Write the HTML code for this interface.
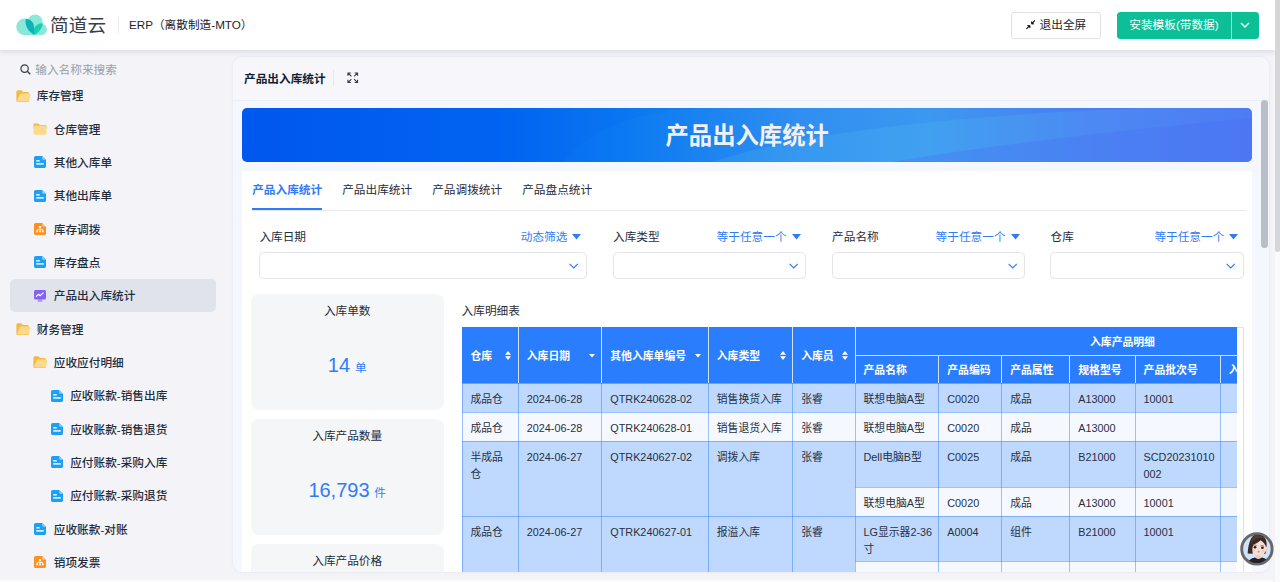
<!DOCTYPE html><html lang="zh-CN"><head><meta charset="utf-8"><title>产品出入库统计</title><style>
*{box-sizing:border-box;margin:0;padding:0}
html,body{width:1280px;height:582px;overflow:hidden;background:#f3f3f8}
body{position:relative;font-family:"Liberation Sans","Noto Sans CJK SC",sans-serif;font-size:11.67px;color:#1f2d3d;line-height:1}
.a{position:absolute;white-space:nowrap}
.t{position:absolute;white-space:nowrap;line-height:16px;height:16px}
#hdr{left:0;top:0;width:1275px;height:50px;background:#fff;box-shadow:0 1px 6px rgba(60,70,100,.18)}
#side{left:0;top:50px;width:233px;height:532px}
.si{position:absolute;left:0;width:233px;height:33.33px}
.si .tx{position:absolute;top:0;line-height:33.33px;font-weight:500;color:#1f2d3d;white-space:nowrap}
.si svg{position:absolute}
#panel{left:233px;top:57px;width:1036px;height:515px;background:#f6f6fb;border-radius:9px;overflow:hidden;box-shadow:0 0 3px rgba(80,90,120,.10)}
#cont{left:0;top:42.5px;width:1036px;height:473px;background:#f4f8fe;border-top:1px solid #ebeef5}
#banner{left:9px;top:51px;width:1010.4px;height:54px;border-radius:5px;overflow:hidden;background:linear-gradient(90deg,#0058f0 0%,#0264f2 25%,#0b7af2 38%,#2f8ef0 55%,#3c98f0 68%,#4a7cf3 85%,#4a6cf5 100%)}
#card{left:9px;top:113.5px;width:1010.4px;height:402px;background:#fff}
.lnk{color:#2f7cf6}
.inp{position:absolute;height:27.3px;border:1px solid #e3e5ea;border-radius:4.500px;background:#fff}
.stat{position:absolute;left:8.5px;width:193.4px;height:116px;background:#f5f6f8;border-radius:8px}
.stat .lb{position:absolute;left:0;right:0;top:8.6px;text-align:center;line-height:16px;color:#1f2d3d}
.stat .vl{position:absolute;left:0;right:0;text-align:center;color:#2f7cf6;white-space:nowrap}


#tb{position:absolute;left:461.6px;top:327.4px;width:782.4px;height:244.2px;overflow:hidden;background:#fff;box-shadow:inset -1px 0 0 #d5e3fc, inset 0 1px 0 #d5e3fc}
#tbi{position:absolute;left:0;top:0;width:775.4px;height:260px;overflow:hidden}
.c{position:absolute;overflow:hidden}
.c span{position:absolute;left:8.8px;top:7.2px;line-height:16.67px;font-size:10.83px;color:#27303f;white-space:nowrap;font-family:"Liberation Sans","Noto Sans CJK SC",sans-serif}
.h span{color:#fff;font-weight:700;font-family:"Noto Sans CJK SC","Liberation Sans",sans-serif}
.v{position:absolute;width:1px}
.hl{position:absolute;height:1px}
</style></head><body><div id="hdr" class="a">
<svg class="a" style="left:10px;top:8px" width="50" height="34" viewBox="10 8 50 34">
<g fill="#8ae8d9"><circle cx="24.600" cy="26.900" r="8.300"/><circle cx="35.100" cy="22.100" r="7.600"/><circle cx="41.100" cy="29.400" r="5.800"/><rect x="24.600" y="27" width="16.500" height="8.200"/></g>
<path d="M25.800 18.800C30.500 19 34 22.500 34 27L34 34.900C29 31.500 24.300 27 25.800 18.800Z" fill="#0cb4b8"/>
<path d="M34 34.900L34 28.500C35.500 25 39 23 42.700 23.200C42.500 28 39 32.500 34 34.900Z" fill="#1acfb0"/>
</svg>
<div class="a cjk" style="left:50px;top:13.600px;font-size:18.600px;line-height:24px;color:#3a3f47;letter-spacing:.2px">简道云</div>
<div class="a" style="left:118px;top:17px;width:1px;height:16px;background:#e6e8ec"></div>
<div class="a" style="left:129px;top:17px;line-height:16px;font-size:11.67px;color:#1f2329">ERP（离散制造-MTO）</div>
<div class="a" style="left:1011px;top:12px;width:89.6px;height:26.7px;border:1px solid #dfe1e6;border-radius:3px;background:#fff"></div>
<svg class="a" style="left:1025.700px;top:19.900px" width="9.400" height="9.400" viewBox="0 0 10 10"><path d="M9.6.4 6 4M6 4V1.500M6 4h2.500M.4 9.600 4 6M4 6v2.500M4 6H1.500" stroke="#1f2329" stroke-width="1.200" fill="none"/><path d="M5.600 4.400V1.600L8.400 4.400zM4.400 5.600v2.800L1.600 5.600z" fill="#1f2329"/></svg>
<div class="a cjk" style="left:1039.6px;top:17px;line-height:16px;color:#1f2329">退出全屏</div>
<div class="a" style="left:1117.3px;top:12px;width:141.5px;height:26.7px;border-radius:3.500px;background:#0dbf96"></div>
<div class="a" style="left:1231.2px;top:12px;width:1px;height:26.7px;background:#9be5d3"></div>
<div class="a cjk" style="left:1129.3px;top:17px;line-height:16px;color:#fff">安装模板(带数据)</div>
<svg class="a" style="left:1240.4px;top:22.3px" width="10" height="6" viewBox="0 0 10 6"><path d="M1 1l4 4 4-4" stroke="#fff" stroke-width="1.400" fill="none"/></svg>
</div>
<div class="a" style="left:1275px;top:0;width:5px;height:582px;background:#fafafa"></div>
<div class="a" style="left:1275px;top:0;width:5px;height:252px;background:#d6d6d8;border-radius:0 0 3px 3px"></div>
<div id="side" class="a">
<svg class="a" style="left:20px;top:13.500px" width="11" height="11" viewBox="0 0 11 11"><circle cx="4.600" cy="4.600" r="3.700" stroke="#3a3f47" stroke-width="1.200" fill="none"/><path d="M7.300 7.300l3 3" stroke="#3a3f47" stroke-width="1.300"/></svg>
<div class="a" style="left:35.3px;top:11.700px;line-height:16px;color:#9a9ea6">输入名称来搜索</div>
<div class="a" style="left:10px;top:229px;width:206px;height:33px;border-radius:5px;background:#e1e3ea"></div>
<div class="si" style="top:29.33px"><svg style="left:16.1px;top:10.3px" width="14.500" height="12.500" viewBox="0 0 14.500 12.500"><path d="M.4 2C.4 1 1.100.3 2 .3h3c.5 0 .9.200 1.200.6l.8 1h4.300c.9 0 1.600.7 1.600 1.600v6.900c0 .9-.7 1.600-1.600 1.600H2c-.9 0-1.600-.7-1.600-1.600z" fill="#f7b740"/><path d="M3.600 4.600c.15-.6.700-1 1.300-1h8.200c.9 0 1.500.8 1.300 1.700l-1.200 5.300c-.15.600-.7 1-1.300 1H2.600c-.9 0-1.500-.8-1.300-1.600z" fill="#fdd98c"/></svg><div class="tx" style="left:36.8px">库存管理</div></div>
<div class="si" style="top:62.66px"><svg style="left:33.2px;top:10.1px" width="14" height="12" viewBox="0 0 14 12"><path d="M0.400 1.800C0.400 1 1 .4 1.800.4h3c.4 0 .8.200 1.100.5l.9 1h5.300c.8 0 1.400.6 1.400 1.400V5H.4z" fill="#f7b84b"/><rect x=".4" y="2.700" width="13.100" height="9" rx="1.400" fill="#fdd98c"/></svg><div class="tx" style="left:53.8px">仓库管理</div></div>
<div class="si" style="top:96.00px"><svg style="left:34.0px;top:10.4px" width="12" height="12" viewBox="0 0 12 12"><path d="M1.800 0h6.400L12 3.800v6.400c0 1-.8 1.800-1.800 1.800H1.800C.8 12 0 11.200 0 10.200V1.800C0 .8.800 0 1.800 0z" fill="#1c9ff7"/><path d="M8.200 0 12 3.800H9.400c-.7 0-1.200-.5-1.200-1.200z" fill="#8fd0fb"/><rect x="2.200" y="4.200" width="3.600" height="1.300" fill="#fff"/><rect x="2.200" y="7.200" width="7.600" height="1.400" fill="#fff"/></svg><div class="tx" style="left:53.8px">其他入库单</div></div>
<div class="si" style="top:129.33px"><svg style="left:34.0px;top:10.4px" width="12" height="12" viewBox="0 0 12 12"><path d="M1.800 0h6.400L12 3.800v6.400c0 1-.8 1.800-1.800 1.800H1.800C.8 12 0 11.200 0 10.200V1.800C0 .8.800 0 1.800 0z" fill="#1c9ff7"/><path d="M8.200 0 12 3.800H9.400c-.7 0-1.200-.5-1.200-1.200z" fill="#8fd0fb"/><rect x="2.200" y="4.200" width="3.600" height="1.300" fill="#fff"/><rect x="2.200" y="7.200" width="7.600" height="1.400" fill="#fff"/></svg><div class="tx" style="left:53.8px">其他出库单</div></div>
<div class="si" style="top:162.66px"><svg style="left:34.0px;top:10.4px" width="12" height="12" viewBox="0 0 12 12"><path d="M1.800 0h6.400L12 3.800v6.400c0 1-.8 1.800-1.800 1.800H1.800C.8 12 0 11.200 0 10.200V1.800C0 .8.800 0 1.800 0z" fill="#ff8f1f"/><path d="M8.200 0 12 3.800H9.400c-.7 0-1.200-.5-1.200-1.200z" fill="#ffc78c"/><rect x="4.900" y="3" width="2.200" height="2" fill="#fff"/><rect x="2.200" y="7.500" width="1.900" height="1.800" fill="#fff"/><rect x="5.050" y="7.500" width="1.900" height="1.800" fill="#fff"/><rect x="7.900" y="7.500" width="1.900" height="1.800" fill="#fff"/><path d="M6 5v1.400M3.150 7.500V6.400h5.700v1.100M6 6.400v1.100" stroke="#fff" stroke-width=".8" fill="none"/></svg><div class="tx" style="left:53.8px">库存调拨</div></div>
<div class="si" style="top:196.00px"><svg style="left:34.0px;top:10.4px" width="12" height="12" viewBox="0 0 12 12"><path d="M1.800 0h6.400L12 3.800v6.400c0 1-.8 1.800-1.800 1.800H1.800C.8 12 0 11.200 0 10.200V1.800C0 .8.800 0 1.800 0z" fill="#1c9ff7"/><path d="M8.200 0 12 3.800H9.400c-.7 0-1.200-.5-1.200-1.200z" fill="#8fd0fb"/><rect x="2.200" y="4.200" width="3.600" height="1.300" fill="#fff"/><rect x="2.200" y="7.200" width="7.600" height="1.400" fill="#fff"/></svg><div class="tx" style="left:53.8px">库存盘点</div></div>
<div class="si" style="top:229.33px"><svg style="left:34.0px;top:10.4px" width="12" height="12" viewBox="0 0 12 12"><path d="M4.300 9.200h3.400l.9 2.500H3.400z" fill="#ab92f9"/><rect x="0" y="0" width="12" height="9.400" rx="1.500" fill="#8560f2"/><path d="M2.300 6.400l2-2 1.900 1.200 3-2.700" stroke="#fff" stroke-width="1.250" fill="none" stroke-linejoin="round" stroke-linecap="round"/></svg><div class="tx" style="left:53.8px">产品出入库统计</div></div>
<div class="si" style="top:262.66px"><svg style="left:16.1px;top:10.3px" width="14.500" height="12.500" viewBox="0 0 14.500 12.500"><path d="M.4 2C.4 1 1.100.3 2 .3h3c.5 0 .9.200 1.200.6l.8 1h4.300c.9 0 1.600.7 1.600 1.600v6.900c0 .9-.7 1.600-1.600 1.600H2c-.9 0-1.600-.7-1.600-1.600z" fill="#f7b740"/><path d="M3.600 4.600c.15-.6.700-1 1.300-1h8.200c.9 0 1.500.8 1.300 1.700l-1.200 5.300c-.15.600-.7 1-1.300 1H2.600c-.9 0-1.500-.8-1.300-1.600z" fill="#fdd98c"/></svg><div class="tx" style="left:36.8px">财务管理</div></div>
<div class="si" style="top:295.99px"><svg style="left:33.2px;top:10.3px" width="14.500" height="12.500" viewBox="0 0 14.500 12.500"><path d="M.4 2C.4 1 1.100.3 2 .3h3c.5 0 .9.200 1.200.6l.8 1h4.300c.9 0 1.600.7 1.600 1.600v6.900c0 .9-.7 1.600-1.600 1.600H2c-.9 0-1.600-.7-1.600-1.600z" fill="#f7b740"/><path d="M3.600 4.600c.15-.6.700-1 1.300-1h8.200c.9 0 1.500.8 1.300 1.700l-1.200 5.300c-.15.600-.7 1-1.300 1H2.600c-.9 0-1.500-.8-1.300-1.600z" fill="#fdd98c"/></svg><div class="tx" style="left:53.8px">应收应付明细</div></div>
<div class="si" style="top:329.33px"><svg style="left:51.0px;top:10.4px" width="12" height="12" viewBox="0 0 12 12"><path d="M1.800 0h6.400L12 3.800v6.400c0 1-.8 1.800-1.800 1.800H1.800C.8 12 0 11.200 0 10.200V1.800C0 .8.800 0 1.800 0z" fill="#1c9ff7"/><path d="M8.200 0 12 3.800H9.400c-.7 0-1.200-.5-1.200-1.200z" fill="#8fd0fb"/><rect x="2.200" y="4.200" width="3.600" height="1.300" fill="#fff"/><rect x="2.200" y="7.200" width="7.600" height="1.400" fill="#fff"/></svg><div class="tx" style="left:70.2px">应收账款-销售出库</div></div>
<div class="si" style="top:362.66px"><svg style="left:51.0px;top:10.4px" width="12" height="12" viewBox="0 0 12 12"><path d="M1.800 0h6.400L12 3.800v6.400c0 1-.8 1.800-1.800 1.800H1.800C.8 12 0 11.200 0 10.200V1.800C0 .8.800 0 1.800 0z" fill="#1c9ff7"/><path d="M8.200 0 12 3.800H9.400c-.7 0-1.200-.5-1.200-1.200z" fill="#8fd0fb"/><rect x="2.200" y="4.200" width="3.600" height="1.300" fill="#fff"/><rect x="2.200" y="7.200" width="7.600" height="1.400" fill="#fff"/></svg><div class="tx" style="left:70.2px">应收账款-销售退货</div></div>
<div class="si" style="top:395.99px"><svg style="left:51.0px;top:10.4px" width="12" height="12" viewBox="0 0 12 12"><path d="M1.800 0h6.400L12 3.800v6.400c0 1-.8 1.800-1.800 1.800H1.800C.8 12 0 11.200 0 10.200V1.800C0 .8.800 0 1.800 0z" fill="#1c9ff7"/><path d="M8.200 0 12 3.800H9.400c-.7 0-1.200-.5-1.200-1.200z" fill="#8fd0fb"/><rect x="2.200" y="4.200" width="3.600" height="1.300" fill="#fff"/><rect x="2.200" y="7.200" width="7.600" height="1.400" fill="#fff"/></svg><div class="tx" style="left:70.2px">应付账款-采购入库</div></div>
<div class="si" style="top:429.33px"><svg style="left:51.0px;top:10.4px" width="12" height="12" viewBox="0 0 12 12"><path d="M1.800 0h6.400L12 3.800v6.400c0 1-.8 1.800-1.800 1.800H1.800C.8 12 0 11.200 0 10.200V1.800C0 .8.800 0 1.800 0z" fill="#1c9ff7"/><path d="M8.200 0 12 3.800H9.400c-.7 0-1.200-.5-1.200-1.200z" fill="#8fd0fb"/><rect x="2.200" y="4.200" width="3.600" height="1.300" fill="#fff"/><rect x="2.200" y="7.200" width="7.600" height="1.400" fill="#fff"/></svg><div class="tx" style="left:70.2px">应付账款-采购退货</div></div>
<div class="si" style="top:462.66px"><svg style="left:34.0px;top:10.4px" width="12" height="12" viewBox="0 0 12 12"><path d="M1.800 0h6.400L12 3.800v6.400c0 1-.8 1.800-1.800 1.800H1.800C.8 12 0 11.200 0 10.200V1.800C0 .8.800 0 1.800 0z" fill="#1c9ff7"/><path d="M8.200 0 12 3.800H9.400c-.7 0-1.200-.5-1.200-1.200z" fill="#8fd0fb"/><rect x="2.200" y="4.200" width="3.600" height="1.300" fill="#fff"/><rect x="2.200" y="7.200" width="7.600" height="1.400" fill="#fff"/></svg><div class="tx" style="left:53.8px">应收账款-对账</div></div>
<div class="si" style="top:495.99px"><svg style="left:34.0px;top:10.4px" width="12" height="12" viewBox="0 0 12 12"><path d="M1.800 0h6.400L12 3.800v6.400c0 1-.8 1.800-1.800 1.800H1.800C.8 12 0 11.200 0 10.200V1.800C0 .8.800 0 1.800 0z" fill="#ff8f1f"/><path d="M8.200 0 12 3.800H9.400c-.7 0-1.200-.5-1.200-1.200z" fill="#ffc78c"/><rect x="4.900" y="3" width="2.200" height="2" fill="#fff"/><rect x="2.200" y="7.500" width="1.900" height="1.800" fill="#fff"/><rect x="5.050" y="7.500" width="1.900" height="1.800" fill="#fff"/><rect x="7.900" y="7.500" width="1.900" height="1.800" fill="#fff"/><path d="M6 5v1.400M3.150 7.500V6.400h5.700v1.100M6 6.400v1.100" stroke="#fff" stroke-width=".8" fill="none"/></svg><div class="tx" style="left:53.8px">销项发票</div></div>
</div>
<div class="a" style="left:0;top:579.5px;width:1273px;height:3px;background:#fbfbfd"></div>
<div id="panel" class="a">
<div class="a cjk" style="left:11px;top:13.500px;line-height:16px;font-weight:700;color:#141e31">产品出入库统计</div>
<div class="a" style="left:99.5px;top:13px;width:1px;height:16px;background:#e4e7ed"></div>
<svg class="a" style="left:114.300px;top:15.100px" width="11.500" height="11.500" viewBox="0 0 12 12"><path d="M1 4V1h3M1.200 1.200 4.600 4.600M8 1h3v3M10.800 1.200 7.400 4.600M1 8v3h3M1.200 10.800 4.600 7.400M11 8v3H8M10.800 10.800 7.400 7.400" stroke="#363d4c" stroke-width="1.150" fill="none"/></svg>
<div id="cont" class="a"></div>
<div class="a" style="left:1028px;top:43px;width:6.700px;height:148px;border-radius:3.500px;background:#b9bec8"></div>
<div id="banner" class="a">
<svg class="a" style="left:0;top:0" width="1010.400" height="54" viewBox="0 0 1010.400 54" preserveAspectRatio="none">
<path d="M320 54C350 20 400 0 470 0H0V54Z" fill="#0058e8" opacity=".10"/>
<path d="M470 54C560 25 700 8 900 0H1010.400V54Z" fill="#5fd0f0" opacity=".16"/>
<path d="M650 54C760 36 880 22 1010.400 10V54Z" fill="#4a6cf5" opacity=".30"/>
</svg>
<div class="a cjk" style="left:0;width:1010.4px;top:10.800px;text-align:center;font-size:23.33px;line-height:34px;font-weight:700;color:#f1f1f2">产品出入库统计</div>
</div>
<div id="card" class="a">
<div class="t cjk" style="left:10.2px;top:11.500px;color:#2f7cf6;font-weight:700">产品入库统计</div>
<div class="t cjk" style="left:100.2px;top:11.500px;color:#1f2d3d">产品出库统计</div>
<div class="t cjk" style="left:190.2px;top:11.500px;color:#1f2d3d">产品调拨统计</div>
<div class="t cjk" style="left:280.2px;top:11.500px;color:#1f2d3d">产品盘点统计</div>
<div class="a" style="left:10px;top:39.300px;width:994px;height:1px;background:#e6e9ef"></div>
<div class="a" style="left:10px;top:37.300px;width:70px;height:2.300px;background:#2f7cf6"></div>
<div class="t cjk" style="left:17.4px;top:58.0px">入库日期</div>
<div class="t cjk lnk" style="left:278.8px;top:58.0px">动态筛选</div>
<svg class="a" style="left:330.2px;top:63.5px" width="9" height="5.500" viewBox="0 0 9 5.500"><path d="M0 0h9L4.500 5.500z" fill="#2f7cf6"/></svg>
<div class="inp" style="left:17.0px;top:81.6px;width:328.0px"></div>
<svg class="a" style="left:327.3px;top:92.3px" width="9.500" height="6" viewBox="0 0 9.500 6"><path d="M.6.800l4.150 4.200L8.900.8" stroke="#2f7cf6" stroke-width="1.200" fill="none"/></svg>
<div class="t cjk" style="left:371.0px;top:58.0px">入库类型</div>
<div class="t cjk lnk" style="left:474.6px;top:58.0px">等于任意一个</div>
<svg class="a" style="left:549.6px;top:63.5px" width="9" height="5.500" viewBox="0 0 9 5.500"><path d="M0 0h9L4.500 5.500z" fill="#2f7cf6"/></svg>
<div class="inp" style="left:370.6px;top:81.6px;width:193.8px"></div>
<svg class="a" style="left:546.7px;top:92.3px" width="9.500" height="6" viewBox="0 0 9.500 6"><path d="M.6.800l4.150 4.200L8.900.8" stroke="#2f7cf6" stroke-width="1.200" fill="none"/></svg>
<div class="t cjk" style="left:590.1px;top:58.0px">产品名称</div>
<div class="t cjk lnk" style="left:693.6px;top:58.0px">等于任意一个</div>
<svg class="a" style="left:768.6px;top:63.5px" width="9" height="5.500" viewBox="0 0 9 5.500"><path d="M0 0h9L4.500 5.500z" fill="#2f7cf6"/></svg>
<div class="inp" style="left:589.7px;top:81.6px;width:193.7px"></div>
<svg class="a" style="left:765.7px;top:92.3px" width="9.500" height="6" viewBox="0 0 9.500 6"><path d="M.6.800l4.150 4.200L8.900.8" stroke="#2f7cf6" stroke-width="1.200" fill="none"/></svg>
<div class="t cjk" style="left:808.6px;top:58.0px">仓库</div>
<div class="t cjk lnk" style="left:912.4px;top:58.0px">等于任意一个</div>
<svg class="a" style="left:986.8px;top:63.5px" width="9" height="5.500" viewBox="0 0 9 5.500"><path d="M0 0h9L4.500 5.500z" fill="#2f7cf6"/></svg>
<div class="inp" style="left:808.2px;top:81.6px;width:193.4px"></div>
<svg class="a" style="left:983.9px;top:92.3px" width="9.500" height="6" viewBox="0 0 9.500 6"><path d="M.6.800l4.150 4.200L8.900.8" stroke="#2f7cf6" stroke-width="1.200" fill="none"/></svg>
<div class="stat" style="top:123.5px"><div class="lb cjk">入库单数</div>
<div class="vl" style="top:58px;line-height:26px"><span style="font-size:20px">14</span><span class="cjk" style="font-size:11.67px;margin-left:4.800px">单</span></div>
</div>
<div class="stat" style="top:248.5px"><div class="lb cjk">入库产品数量</div>
<div class="vl" style="top:58px;line-height:26px"><span style="font-size:20px">16,793</span><span class="cjk" style="font-size:11.67px;margin-left:4.800px">件</span></div>
</div>
<div class="stat" style="top:373.5px"><div class="lb cjk">入库产品价格</div>
</div>
<div class="t cjk" style="left:219.6px;top:132.1px">入库明细表</div>
</div>
</div><div id="tb"><div id="tbi">
<div class="c h" style="left:0.0px;top:0.0px;width:56.4px;height:56.0px;background:#2a7dfc"><span style="top:19.4px">仓库</span></div>
<div class="c h" style="left:56.4px;top:0.0px;width:83.5px;height:56.0px;background:#2a7dfc"><span style="top:19.4px">入库日期</span></div>
<div class="c h" style="left:139.9px;top:0.0px;width:106.5px;height:56.0px;background:#2a7dfc"><span style="top:19.4px">其他入库单编号</span></div>
<div class="c h" style="left:246.4px;top:0.0px;width:84.4px;height:56.0px;background:#2a7dfc"><span style="top:19.4px">入库类型</span></div>
<div class="c h" style="left:330.8px;top:0.0px;width:62.3px;height:56.0px;background:#2a7dfc"><span style="top:19.4px">入库员</span></div>
<div class="c h" style="left:393.1px;top:0;width:545.3px;height:27.4px;background:#2a7dfc"><span style="left:235.3px;top:5.6px">入库产品明细</span></div>
<div class="c h" style="left:393.1px;top:27.4px;width:83.8px;height:28.6px;background:#2a7dfc"><span style="top:5.8px">产品名称</span></div>
<div class="c h" style="left:476.9px;top:27.4px;width:62.9px;height:28.6px;background:#2a7dfc"><span style="top:5.8px">产品编码</span></div>
<div class="c h" style="left:539.8px;top:27.4px;width:68.1px;height:28.6px;background:#2a7dfc"><span style="top:5.8px">产品属性</span></div>
<div class="c h" style="left:607.9px;top:27.4px;width:65.3px;height:28.6px;background:#2a7dfc"><span style="top:5.8px">规格型号</span></div>
<div class="c h" style="left:673.2px;top:27.4px;width:85.2px;height:28.6px;background:#2a7dfc"><span style="top:5.8px">产品批次号</span></div>
<div class="c h" style="left:758.4px;top:27.4px;width:80.0px;height:28.6px;background:#2a7dfc"><span style="top:5.8px">入库数量</span></div>
<svg style="position:absolute;left:43.8px;top:23.4px" width="6" height="9" viewBox="0 0 6 9"><path d="M3 0l3 3.700H0zM3 9 0 5.300h6z" fill="#fff"/></svg>
<svg style="position:absolute;left:127.4px;top:26.6px" width="6" height="3.600" viewBox="0 0 6 3.600"><path d="M0 0h6L3 3.600z" fill="#fff"/></svg>
<svg style="position:absolute;left:233.4px;top:26.6px" width="6" height="3.600" viewBox="0 0 6 3.600"><path d="M0 0h6L3 3.600z" fill="#fff"/></svg>
<svg style="position:absolute;left:318.6px;top:23.4px" width="6" height="9" viewBox="0 0 6 9"><path d="M3 0l3 3.700H0zM3 9 0 5.300h6z" fill="#fff"/></svg>
<svg style="position:absolute;left:380.4px;top:23.4px" width="6" height="9" viewBox="0 0 6 9"><path d="M3 0l3 3.700H0zM3 9 0 5.300h6z" fill="#fff"/></svg>
<div class="c" style="left:0.0px;top:56.0px;width:56.4px;height:28.8px;background:#bfd9fe"><span>成品仓</span></div>
<div class="c" style="left:56.4px;top:56.0px;width:83.5px;height:28.8px;background:#bfd9fe"><span>2024-06-28</span></div>
<div class="c" style="left:139.9px;top:56.0px;width:106.5px;height:28.8px;background:#bfd9fe"><span>QTRK240628-02</span></div>
<div class="c" style="left:246.4px;top:56.0px;width:84.4px;height:28.8px;background:#bfd9fe"><span>销售换货入库</span></div>
<div class="c" style="left:330.8px;top:56.0px;width:62.3px;height:28.8px;background:#bfd9fe"><span>张睿</span></div>
<div class="c" style="left:393.1px;top:56.0px;width:83.8px;height:28.8px;background:#bfd9fe"><span>联想电脑A型</span></div>
<div class="c" style="left:476.9px;top:56.0px;width:62.9px;height:28.8px;background:#bfd9fe"><span>C0020</span></div>
<div class="c" style="left:539.8px;top:56.0px;width:68.1px;height:28.8px;background:#bfd9fe"><span>成品</span></div>
<div class="c" style="left:607.9px;top:56.0px;width:65.3px;height:28.8px;background:#bfd9fe"><span>A13000</span></div>
<div class="c" style="left:673.2px;top:56.0px;width:85.2px;height:28.8px;background:#bfd9fe"><span>10001</span></div>
<div class="c" style="left:758.4px;top:56.0px;width:80.0px;height:28.8px;background:#bfd9fe"></div>
<div class="c" style="left:0.0px;top:84.8px;width:56.4px;height:29.1px;background:#f5f9ff"><span style="top:8.0px">成品仓</span></div>
<div class="c" style="left:56.4px;top:84.8px;width:83.5px;height:29.1px;background:#f5f9ff"><span style="top:8.0px">2024-06-28</span></div>
<div class="c" style="left:139.9px;top:84.8px;width:106.5px;height:29.1px;background:#f5f9ff"><span style="top:8.0px">QTRK240628-01</span></div>
<div class="c" style="left:246.4px;top:84.8px;width:84.4px;height:29.1px;background:#f5f9ff"><span style="top:8.0px">销售退货入库</span></div>
<div class="c" style="left:330.8px;top:84.8px;width:62.3px;height:29.1px;background:#f5f9ff"><span style="top:8.0px">张睿</span></div>
<div class="c" style="left:393.1px;top:84.8px;width:83.8px;height:29.1px;background:#f5f9ff"><span style="top:8.0px">联想电脑A型</span></div>
<div class="c" style="left:476.9px;top:84.8px;width:62.9px;height:29.1px;background:#f5f9ff"><span style="top:8.0px">C0020</span></div>
<div class="c" style="left:539.8px;top:84.8px;width:68.1px;height:29.1px;background:#f5f9ff"><span style="top:8.0px">成品</span></div>
<div class="c" style="left:607.9px;top:84.8px;width:65.3px;height:29.1px;background:#f5f9ff"><span style="top:8.0px">A13000</span></div>
<div class="c" style="left:673.2px;top:84.8px;width:85.2px;height:29.1px;background:#f5f9ff"></div>
<div class="c" style="left:758.4px;top:84.8px;width:80.0px;height:29.1px;background:#f5f9ff"></div>
<div class="c" style="left:0.0px;top:113.9px;width:56.4px;height:74.9px;background:#bfd9fe"><span style="top:8.0px">半成品<br>仓</span></div>
<div class="c" style="left:56.4px;top:113.9px;width:83.5px;height:74.9px;background:#bfd9fe"><span style="top:8.0px">2024-06-27</span></div>
<div class="c" style="left:139.9px;top:113.9px;width:106.5px;height:74.9px;background:#bfd9fe"><span style="top:8.0px">QTRK240627-02</span></div>
<div class="c" style="left:246.4px;top:113.9px;width:84.4px;height:74.9px;background:#bfd9fe"><span style="top:8.0px">调拨入库</span></div>
<div class="c" style="left:330.8px;top:113.9px;width:62.3px;height:74.9px;background:#bfd9fe"><span style="top:8.0px">张睿</span></div>
<div class="c" style="left:393.1px;top:113.9px;width:83.8px;height:46.1px;background:#bfd9fe"><span style="top:8.0px">Dell电脑B型</span></div>
<div class="c" style="left:476.9px;top:113.9px;width:62.9px;height:46.1px;background:#bfd9fe"><span style="top:8.0px">C0025</span></div>
<div class="c" style="left:539.8px;top:113.9px;width:68.1px;height:46.1px;background:#bfd9fe"><span style="top:8.0px">成品</span></div>
<div class="c" style="left:607.9px;top:113.9px;width:65.3px;height:46.1px;background:#bfd9fe"><span style="top:8.0px">B21000</span></div>
<div class="c" style="left:673.2px;top:113.9px;width:85.2px;height:46.1px;background:#bfd9fe"><span style="top:8.0px">SCD20231010<br>002</span></div>
<div class="c" style="left:758.4px;top:113.9px;width:80.0px;height:46.1px;background:#bfd9fe"></div>
<div class="c" style="left:393.1px;top:160.0px;width:83.8px;height:28.8px;background:#f5f9ff"><span>联想电脑A型</span></div>
<div class="c" style="left:476.9px;top:160.0px;width:62.9px;height:28.8px;background:#f5f9ff"><span>C0020</span></div>
<div class="c" style="left:539.8px;top:160.0px;width:68.1px;height:28.8px;background:#f5f9ff"><span>成品</span></div>
<div class="c" style="left:607.9px;top:160.0px;width:65.3px;height:28.8px;background:#f5f9ff"><span>A13000</span></div>
<div class="c" style="left:673.2px;top:160.0px;width:85.2px;height:28.8px;background:#f5f9ff"><span>10001</span></div>
<div class="c" style="left:758.4px;top:160.0px;width:80.0px;height:28.8px;background:#f5f9ff"></div>
<div class="c" style="left:0.0px;top:188.8px;width:56.4px;height:83.8px;background:#bfd9fe"><span style="top:7.8px">成品仓</span></div>
<div class="c" style="left:56.4px;top:188.8px;width:83.5px;height:83.8px;background:#bfd9fe"><span style="top:7.8px">2024-06-27</span></div>
<div class="c" style="left:139.9px;top:188.8px;width:106.5px;height:83.8px;background:#bfd9fe"><span style="top:7.8px">QTRK240627-01</span></div>
<div class="c" style="left:246.4px;top:188.8px;width:84.4px;height:83.8px;background:#bfd9fe"><span style="top:7.8px">报溢入库</span></div>
<div class="c" style="left:330.8px;top:188.8px;width:62.3px;height:83.8px;background:#bfd9fe"><span style="top:7.8px">张睿</span></div>
<div class="c" style="left:393.1px;top:188.8px;width:83.8px;height:45.3px;background:#bfd9fe"><span style="top:7.8px">LG显示器2-36<br>寸</span></div>
<div class="c" style="left:476.9px;top:188.8px;width:62.9px;height:45.3px;background:#bfd9fe"><span style="top:7.8px">A0004</span></div>
<div class="c" style="left:539.8px;top:188.8px;width:68.1px;height:45.3px;background:#bfd9fe"><span style="top:7.8px">组件</span></div>
<div class="c" style="left:607.9px;top:188.8px;width:65.3px;height:45.3px;background:#bfd9fe"><span style="top:7.8px">B21000</span></div>
<div class="c" style="left:673.2px;top:188.8px;width:85.2px;height:45.3px;background:#bfd9fe"><span style="top:7.8px">10001</span></div>
<div class="c" style="left:758.4px;top:188.8px;width:80.0px;height:45.3px;background:#bfd9fe"></div>
<div class="c" style="left:393.1px;top:234.1px;width:83.8px;height:38.5px;background:#f5f9ff"></div>
<div class="c" style="left:476.9px;top:234.1px;width:62.9px;height:38.5px;background:#f5f9ff"></div>
<div class="c" style="left:539.8px;top:234.1px;width:68.1px;height:38.5px;background:#f5f9ff"></div>
<div class="c" style="left:607.9px;top:234.1px;width:65.3px;height:38.5px;background:#f5f9ff"></div>
<div class="c" style="left:673.2px;top:234.1px;width:85.2px;height:38.5px;background:#f5f9ff"></div>
<div class="c" style="left:758.4px;top:234.1px;width:80.0px;height:38.5px;background:#f5f9ff"></div>
<div class="v" style="left:56.4px;top:0;height:56.0px;background:#cfe2ff"></div>
<div class="v" style="left:139.9px;top:0;height:56.0px;background:#cfe2ff"></div>
<div class="v" style="left:246.4px;top:0;height:56.0px;background:#cfe2ff"></div>
<div class="v" style="left:330.8px;top:0;height:56.0px;background:#cfe2ff"></div>
<div class="v" style="left:393.1px;top:0;height:56.0px;background:#cfe2ff"></div>
<div class="v" style="left:476.9px;top:27.4px;height:28.6px;background:#cfe2ff"></div>
<div class="v" style="left:539.8px;top:27.4px;height:28.6px;background:#cfe2ff"></div>
<div class="v" style="left:607.9px;top:27.4px;height:28.6px;background:#cfe2ff"></div>
<div class="v" style="left:673.2px;top:27.4px;height:28.6px;background:#cfe2ff"></div>
<div class="v" style="left:758.4px;top:27.4px;height:28.6px;background:#cfe2ff"></div>
<div class="hl" style="left:393.1px;top:27.4px;width:600px;background:#cfe2ff"></div>
<div class="hl" style="left:0;top:56.0px;width:800px;background:#6aa3fb"></div>
<div class="v" style="left:0.0px;top:56.0px;height:300px;background:rgba(42,125,252,.45)"></div>
<div class="v" style="left:56.4px;top:56.0px;height:300px;background:rgba(42,125,252,.45)"></div>
<div class="v" style="left:139.9px;top:56.0px;height:300px;background:rgba(42,125,252,.45)"></div>
<div class="v" style="left:246.4px;top:56.0px;height:300px;background:rgba(42,125,252,.45)"></div>
<div class="v" style="left:330.8px;top:56.0px;height:300px;background:rgba(42,125,252,.45)"></div>
<div class="v" style="left:393.1px;top:56.0px;height:300px;background:rgba(42,125,252,.45)"></div>
<div class="v" style="left:476.9px;top:56.0px;height:300px;background:rgba(42,125,252,.45)"></div>
<div class="v" style="left:539.8px;top:56.0px;height:300px;background:rgba(42,125,252,.45)"></div>
<div class="v" style="left:607.9px;top:56.0px;height:300px;background:rgba(42,125,252,.45)"></div>
<div class="v" style="left:673.2px;top:56.0px;height:300px;background:rgba(42,125,252,.45)"></div>
<div class="v" style="left:758.4px;top:56.0px;height:300px;background:rgba(42,125,252,.45)"></div>
<div class="hl" style="left:0.0px;top:84.8px;width:800px;background:rgba(42,125,252,.45)"></div>
<div class="hl" style="left:0.0px;top:113.9px;width:800px;background:rgba(42,125,252,.45)"></div>
<div class="hl" style="left:393.1px;top:160.0px;width:800px;background:rgba(42,125,252,.45)"></div>
<div class="hl" style="left:0.0px;top:188.8px;width:800px;background:rgba(42,125,252,.45)"></div>
<div class="hl" style="left:393.1px;top:234.1px;width:800px;background:rgba(42,125,252,.45)"></div>
</div></div>
<svg style="position:absolute;left:1239.800px;top:532.300px" width="34" height="34" viewBox="0 0 34 34">
<defs><clipPath id="av"><circle cx="16.900" cy="16.900" r="14.200"/></clipPath></defs>
<circle cx="16.900" cy="16.900" r="15.200" fill="#cfe3fb" stroke="#686868" stroke-width="2.900"/>
<g clip-path="url(#av)">
<path d="M24 12.500c2.200 2.400 2.600 6.500 1.200 9.600l-3.400-.6z" fill="#2e201d"/>
<path d="M7.500 34c.2-5 2.800-7.600 7.300-8.400l3.700 1.300 3.600-1.300c4.200.8 6.400 3.400 6.600 8.400z" fill="#232326"/>
<path d="M15.700 21h5.200v4.700c-1.600 1.500-3.600 1.500-5.200 0z" fill="#f1c9bb"/>
<ellipse cx="19.300" cy="16.400" rx="7.100" ry="7.300" fill="#f7ddd2"/>
<ellipse cx="26.600" cy="17.600" rx="1.100" ry="1.500" fill="#f3cdbf"/>
<path d="M16.400 2.500c5.500-.6 9.800 2.800 10.200 8.400.1 1.700 0 3.300-.3 4.700-.9-3-2.800-5.600-5.700-7.300-1.900 1.800-4.200 3.400-7.300 4.500-1.100 2.600-1.100 5.700-.6 8.900l-5-.3c.1-4 .8-8.800 2.300-12.500 1.300-3.400 3.300-6 6.400-6.400z" fill="#3a2823"/>
<path d="M15.500 3.600c3.600-1 7.200.3 9 3.200-2.500-1.300-5.800-1.500-9 .2-2.200 1.200-3.700 3.400-4.600 6 .2-4 1.800-8.200 4.600-9.400z" fill="#5b4037" opacity=".8"/>
<ellipse cx="15" cy="15.200" rx="1.350" ry="1.250" fill="#2a1e1e"/><ellipse cx="22.400" cy="15.700" rx="1.350" ry="1.250" fill="#2a1e1e"/>
<path d="M13 13.600c1.200-.8 2.600-.8 3.700 0M20.500 14c1.200-.6 2.600-.5 3.600.4" stroke="#4a342e" stroke-width=".6" fill="none"/>
<path d="M17.400 19.700c.8-.5 1.700-.5 2.500 0-.7 1-1.800 1-2.500 0z" fill="#d9675f"/>
<ellipse cx="13.800" cy="18.300" rx="1.500" ry=".9" fill="#f3b8ad" opacity=".6"/><ellipse cx="23.300" cy="18.800" rx="1.400" ry=".9" fill="#f3b8ad" opacity=".6"/>
</g></svg></body></html>
